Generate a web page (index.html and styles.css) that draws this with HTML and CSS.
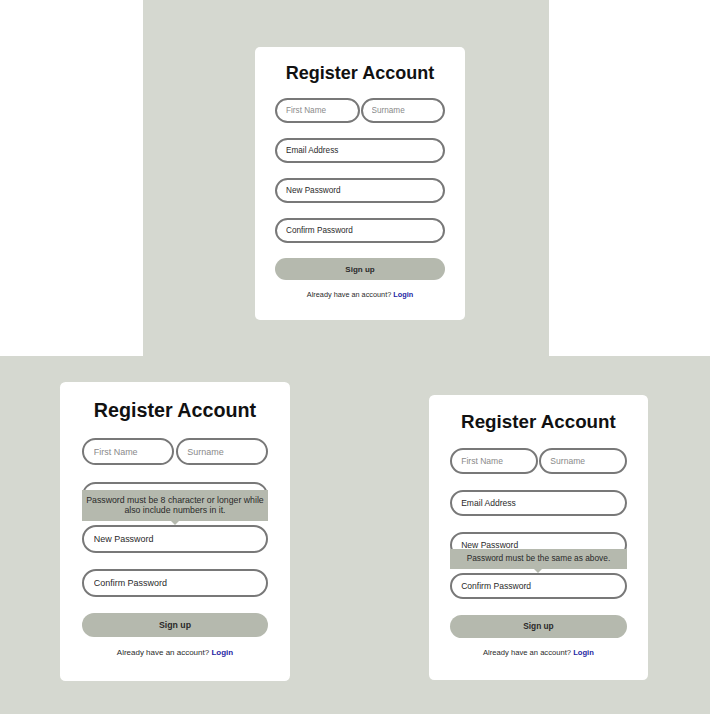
FILE: index.html
```html
<!DOCTYPE html>
<html lang="en">
<head>
    <meta charset="UTF-8">
    <meta name="viewport" content="width=device-width, initial-scale=1.0">
    <title>Register Account</title>
    <link rel="stylesheet" href="styles.css">
</head>
<body>
    <div class="shot shot-top">
        <form class="card">
            <h1 class="card-title">Register Account</h1>
            <div class="name-row">
                <input class="field" type="text" placeholder="First Name">
                <input class="field" type="text" placeholder="Surname">
            </div>
            <input class="field field-strong" type="email" placeholder="Email Address">
            <input class="field field-strong" type="password" placeholder="New Password">
            <input class="field field-strong" type="password" placeholder="Confirm Password">
            <button class="signup" type="button">Sign up</button>
            <p class="login-note">Already have an account? <a href="#">Login</a></p>
        </form>
    </div>

    <div class="shot shot-row">
        <div class="slot slot-left">
            <form class="card card-lg">
                <h1 class="card-title">Register Account</h1>
                <div class="name-row">
                    <input class="field" type="text" placeholder="First Name">
                    <input class="field" type="text" placeholder="Surname">
                </div>
                <input class="field field-strong" type="email" placeholder="Email Address">
                <div class="field-wrap">
                    <div class="tip">Password must be 8 character or longer while<br>also include numbers in it.</div>
                    <input class="field field-strong" type="password" placeholder="New Password">
                </div>
                <input class="field field-strong" type="password" placeholder="Confirm Password">
                <button class="signup" type="button">Sign up</button>
                <p class="login-note">Already have an account? <a href="#">Login</a></p>
            </form>
        </div>
        <div class="slot slot-right">
            <form class="card card-md">
                <h1 class="card-title">Register Account</h1>
                <div class="name-row">
                    <input class="field" type="text" placeholder="First Name">
                    <input class="field" type="text" placeholder="Surname">
                </div>
                <input class="field field-strong" type="email" placeholder="Email Address">
                <input class="field field-strong" type="password" placeholder="New Password">
                <div class="field-wrap">
                    <div class="tip">Password must be the same as above.</div>
                    <input class="field field-strong" type="password" placeholder="Confirm Password">
                </div>
                <button class="signup" type="button">Sign up</button>
                <p class="login-note">Already have an account? <a href="#">Login</a></p>
            </form>
        </div>
    </div>
</body>
</html>
```

FILE: styles.css
```css
:root {
    --panel-bg: #d5d8d0;
    --card-bg: #ffffff;
    --accent: #b5b9ae;
    --border: #787878;
    --text: #2a2a2a;
    --muted: #8a8a8a;
    --link: #1f1fa3;
    --font-family: 'Liberation Sans', Arial, sans-serif;
}
body {
    margin: 0;
    background-color: #ffffff;
    font-family: var(--font-family);
}
.shot {
    background-color: var(--panel-bg);
    box-sizing: border-box;
}
.shot-top {
    width: 406px;
    height: 356px;
    margin-left: 143px;
    padding: 47px 0 0 112px;
}
.shot-row {
    display: flex;
    align-items: flex-start;
    height: 358px;
}
.slot-left {
    padding: 26px 0 0 60px;
}
.slot-right {
    padding: 39px 0 0 139px;
}
.card {
    width: 210px;
    box-sizing: border-box;
    padding: 17px 20px 21px;
    background-color: var(--card-bg);
    border-radius: 5px;
}
.card-lg {
    zoom: 1.095;
}
.card-md {
    zoom: 1.043;
}
.card-title {
    margin: 0 0 1px;
    font-size: 18px;
    line-height: 18px;
    font-weight: 700;
    text-align: center;
    color: #111111;
}
.name-row {
    display: flex;
    gap: 1px;
}
.name-row .field {
    flex: 1;
    min-width: 0;
}
.field-wrap {
    position: relative;
}
.field {
    display: block;
    width: 100%;
    height: 25px;
    margin-top: 15px;
    padding: 0 9px;
    box-sizing: border-box;
    border: 2px solid var(--border);
    border-radius: 13px;
    background-color: #ffffff;
    font-family: var(--font-family);
    font-size: 8.2px;
    color: var(--text);
    outline: none;
}
.field::placeholder {
    color: var(--muted);
}
.field-strong::placeholder {
    color: var(--text);
}
.tip {
    position: absolute;
    left: 0;
    right: 0;
    bottom: calc(100% + 4px);
    padding: 5px 2px;
    background-color: var(--accent);
    font-size: 8px;
    line-height: 9.4px;
    text-align: center;
    color: var(--text);
    z-index: 1;
}
.tip::after {
    content: '';
    position: absolute;
    top: 100%;
    left: 50%;
    margin-left: -4px;
    border-left: 4px solid transparent;
    border-right: 4px solid transparent;
    border-top: 4px solid var(--accent);
}
.signup {
    display: block;
    width: 100%;
    height: 22px;
    margin-top: 15px;
    border: none;
    border-radius: 11px;
    background-color: var(--accent);
    font-family: var(--font-family);
    font-size: 8px;
    font-weight: 700;
    color: var(--text);
    cursor: pointer;
}
.login-note {
    margin: 10px 0 0;
    font-size: 7.3px;
    line-height: 9px;
    text-align: center;
    color: var(--text);
}
.login-note a {
    color: var(--link);
    font-weight: 700;
    text-decoration: none;
}
```
